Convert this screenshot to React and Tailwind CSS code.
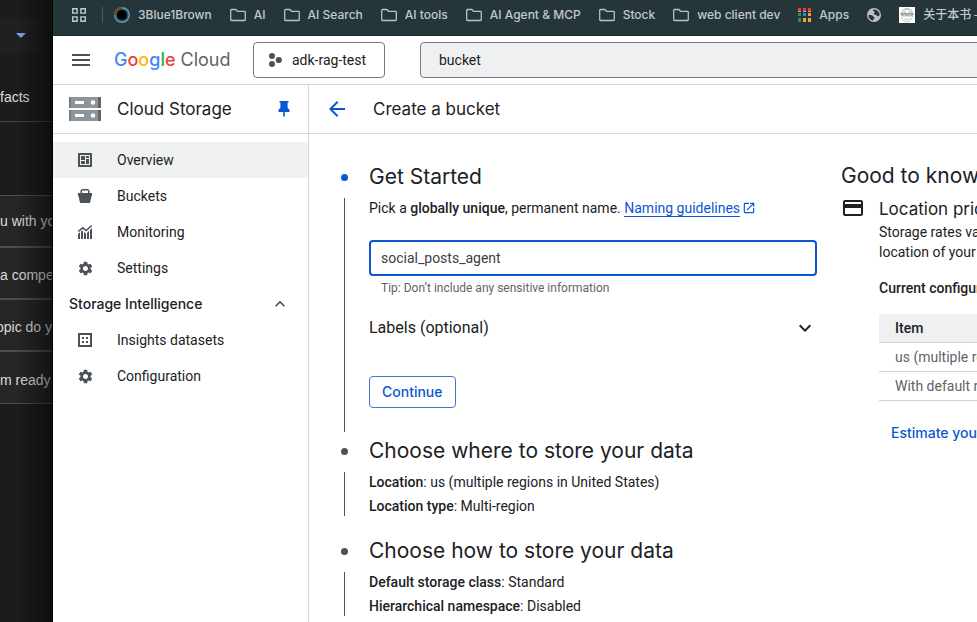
import { MdArrowBack, MdCreditCard, MdExpandLess, MdExpandMore, MdOpenInNew, MdSettings } from "react-icons/md";

const brand = "font-['Inter','Noto_Sans',sans-serif]";

function FolderIcon() {
  return (
    <svg className="h-4 w-4 shrink-0" viewBox="0 0 16 16" fill="none" stroke="#b9c1c2" strokeWidth="1.3">
      <path d="M.7 3.2a.7.7 0 0 1 .7-.7h4.4l1.700 1.800h7a.8.8 0 0 1 .8.8v7.600a.8.8 0 0 1-.8.8H1.500a.8.8 0 0 1-.8-.8z" />
    </svg>
  );
}

function GridIcon() {
  return (
    <svg className="h-[14px] w-[14px] shrink-0" viewBox="0 0 14 14" fill="none" stroke="#c3c9ca" strokeWidth="1.4">
      <path d="M.7.7h4.400v4.400H.7zM8.900.7h4.400v4.400H8.900zM.7 8.900h4.400v4.400H.7zM8.900 8.900h4.400v4.400H8.900z" />
    </svg>
  );
}

function EyeIcon() {
  return (
    <svg className="h-4 w-4 shrink-0" viewBox="0 0 16 16">
      <circle cx="8" cy="8" r="8" fill="#5a9cc0" />
      <path d="M8 8V0a8 8 0 0 0-8 8z" fill="#7a4d2b" />
      <circle cx="8" cy="8" r="6.6" fill="#2b5368" />
      <path d="M8 8V1.4A6.600 6.600 0 0 0 1.400 8z" fill="#5f3b22" />
      <circle cx="8" cy="8" r="5" fill="#000" />
    </svg>
  );
}

function AppsIcon() {
  return (
    <svg className="h-[14px] w-[13px] shrink-0" viewBox="0 0 13 14">
      <path d="M0 0h3v3H0zM5 0h3v3H5zM10 0h3v3h-3z" fill="#ee3a33" />
      <path d="M0 3h3v1H0zM5 3h3v1H5zM10 3h3v1h-3z" fill="#b9aeb0" />
      <path d="M0 5h3v3H0zM0 10h3v4H0z" fill="#2f9350" />
      <path d="M5 5h3v3H5z" fill="#2b84ee" />
      <path d="M10 5h3v3h-3zM5 10h3v4H5zM10 10h3v4h-3z" fill="#f6a623" />
    </svg>
  );
}

function GlobeIcon() {
  return (
    <svg className="h-[14px] w-[14px] shrink-0" viewBox="0 0 14 14">
      <circle cx="7" cy="7" r="7" fill="#bdc1c6" />
      <path d="M1.4 7.3c1.4-.5 3-.4 4 .2.9.5.6 1.3 1.4 1.6.8.3.8.9.3 1.4-.6.6-.5 1.3-.9 2.1C3.500 12.200 1.400 10 1.400 7.300zM6.200 1.500c2.800-.5 5.500 1.200 6.300 4.200.4 1.700-.5 2.700-1.600 2.500-1-.2-.8-1.200-1.900-1.300-.9-.1-2.200-.3-2.200-1.300 0-.8.9-.9 1-1.500.1-.7-.7-.7-1.300-1.100-.5-.4-.7-1-.3-1.500z" fill="#24363a" />
    </svg>
  );
}

function FaceIcon() {
  return (
    <svg className="h-4 w-4 shrink-0" viewBox="0 0 16 16" fill="none" stroke="#999" strokeWidth=".6">
      <path d="M0 0h16v16H0z" fill="#fff" stroke="none" />
      <path d="M2.500 8C2 3.500 4.500 1.500 8 1.500S14 3.500 13.500 8c-.3 4-2.500 7-5.500 7s-5.200-3-5.500-7z" />
      <path d="M3.500 5.500c1.500-1 3-1 4 0M9 5.500c1-1 2.500-1 4 0M5.500 12c1.500.8 3.500.8 5 0M4.500 3.500c2-1.500 5-1.500 7 0M8 8v2.500" />
      <path d="M1 7h14" stroke="#555" />
      <ellipse cx="5.300" cy="7.600" rx="2.200" ry="1.400" stroke="#555" />
      <ellipse cx="10.700" cy="7.600" rx="2.200" ry="1.400" stroke="#555" />
    </svg>
  );
}

function StorageIcon() {
  return (
    <svg className="h-6 w-8 shrink-0" viewBox="0 0 32 24">
      <path d="M0 0h32v11H0zM0 13h32v11H0z" fill="#8d949a" />
      <path d="M0 0h2v11H0zM0 13h2v11H0z" fill="#747b82" />
      <path d="M29 0h3v11h-3zM29 13h3v11h-3z" fill="#60666c" />
      <path d="M6 4h9v3H6zM6 17h9v3H6z" fill="#fff" />
      <circle cx="24" cy="5.500" r="2.200" fill="#fff" />
      <circle cx="24" cy="18.500" r="2.200" fill="#fff" />
    </svg>
  );
}

function PinIcon() {
  return (
    <svg className="h-4 w-3" viewBox="0 0 12 16" fill="#0b57d0">
      <path d="M1.500 0h9v1.600h-.9v5.200L11.500 9v2H6.800v4L6 16l-.8-1v-4H.5V9l1.900-2.200V1.600h-.9z" />
    </svg>
  );
}

function OverviewIcon() {
  return (
    <svg className="h-[14px] w-[14px]" viewBox="0 0 14 14">
      <rect width="14" height="14" rx="1" fill="#4b5157" />
      <path fill="#f0f2f1" d="M2 2h10v10H2z" />
      <path d="M3 3h4v4H3zM8 3h3v2H8zM8 6h3v5H8zM3 8h4v3H3z" fill="#4b5157" />
    </svg>
  );
}

function BucketIcon() {
  return (
    <svg className="h-[14px] w-[14px]" viewBox="0 0 14 14" fill="#4b5157">
      <path fillRule="evenodd" d="M4 0h6l1.500 1.500V4H14v3h-.5L12.200 13a1.200 1.200 0 0 1-1.200 1H3a1.200 1.200 0 0 1-1.200-1L.5 7H0V4h2.500V1.500zM4 1.500V4h6V1.500z" />
    </svg>
  );
}

function MonitoringIcon() {
  return (
    <svg className="h-[14px] w-[14px]" viewBox="0 0 14 14" fill="#4b5157">
      <path d="M0 9l2-1.800V14H0zM3 6.500l2-.9V14H3zM6 7l2 1.500V14H6zM9 8l2-2v8H9zM12 5l2-2v11h-2z" />
      <path d="M.3 6.500L4.800 2.800l3.400 2.700L13.700.5" fill="none" stroke="#4b5157" strokeWidth="1.500" />
    </svg>
  );
}

function DatasetIcon() {
  return (
    <svg className="h-[14px] w-[14px]" viewBox="0 0 14 14">
      <path d="M1 1h12v12H1z" fill="none" stroke="#4b5157" strokeWidth="2" />
      <path d="M4 4h2v2H4zM8 4h2v2H8zM4 8h2v2H4zM8 8h2v2H8z" fill="#4b5157" />
    </svg>
  );
}

function ProjectIcon() {
  return (
    <svg className="h-[14px] w-[14px] shrink-0" viewBox="0 0 14 14" fill="#4b5157">
      <circle cx="4" cy="3" r="3" />
      <circle cx="10.800" cy="7" r="3.100" />
      <circle cx="4" cy="11" r="3" />
    </svg>
  );
}

const bookmarks = [
  { icon: <EyeIcon />, label: "3Blue1Brown" },
  { icon: <FolderIcon />, label: "AI" },
  { icon: <FolderIcon />, label: "AI Search" },
  { icon: <FolderIcon />, label: "AI tools" },
  { icon: <FolderIcon />, label: "AI Agent & MCP" },
  { icon: <FolderIcon />, label: "Stock" },
  { icon: <FolderIcon />, label: "web client dev" },
  { icon: <AppsIcon />, label: "Apps" },
  { icon: <GlobeIcon />, label: "" },
  { icon: <FaceIcon />, label: "关于本书 —" },
];

function BookmarksBar() {
  return (
    <nav aria-label="Bookmarks" className="flex h-9 items-center overflow-hidden border-b border-[#1b2b2f] bg-[#24363a] pb-[5px] pl-[19px] font-['Inter','Noto_Sans_CJK_SC',sans-serif] text-xs font-medium whitespace-nowrap text-[#c3c9ca]">
      <button aria-label="All bookmarks"><GridIcon /></button>
      <span className="mr-[11px] ml-4 h-4 w-px shrink-0 bg-[#4b5b5f]" />
      <div className="flex gap-[18px]">
        {bookmarks.map((b, i) => (
          <a key={i} href="#" aria-label={b.label || "Website"} className="flex h-4 shrink-0 items-center gap-2">
            {b.icon}
            {b.label && <span>{b.label}</span>}
          </a>
        ))}
      </div>
    </nav>
  );
}

function BackgroundWindow() {
  return (
    <aside className="relative w-[53px] shrink-0 overflow-hidden border-r border-black bg-[#1c1c1c] font-['Liberation_Sans',sans-serif] text-sm leading-5 whitespace-nowrap text-[#dcdcdc]">
      <div className="pt-[18px]">
        <div className="flex h-[35px] w-[46px] items-center justify-end rounded-r-lg bg-[#202023] pr-5">
          <svg className="h-[5px] w-[10px]" viewBox="0 0 10 5" fill="#7ba4f0"><path d="M0 0h10L5 5z" /></svg>
        </div>
      </div>
      <div className="flex h-[69px] items-center border-b border-[#444] pt-5">facts</div>
      <div className="mt-[73px] border-t border-[#4b4e52] bg-[#262627]">
        <div className="flex h-[52px] items-center border-b-2 border-[#4b4f55]">u with your</div>
        <div className="flex h-[52px] items-center border-b-2 border-[#4b4f55] pt-1">a compe</div>
        <div className="flex h-[52px] items-center justify-end border-b-2 border-[#4b4f55] pt-1">opic do y</div>
        <div className="flex h-[52px] items-center border-b border-[#4b4e52] pt-1">m ready</div>
      </div>
      <div className="absolute inset-y-0 right-0 w-9 bg-linear-to-r from-transparent to-black/50" />
    </aside>
  );
}

function TopBar() {
  return (
    <header className="flex h-[49px] items-center overflow-hidden border-b border-[#d5d7da] pl-[19px]">
      <button aria-label="Main menu" className="shrink-0">
        <svg className="h-3 w-[18px]" viewBox="0 0 18 12" fill="#4b5157"><path d="M0 0h18v2H0zM0 5h18v2H0zM0 10h18v2H0z" /></svg>
      </button>
      <a href="#" className={`ml-6 w-[116px] shrink-0 text-lg whitespace-nowrap ${brand}`}>
        <span className="font-medium">
          <span className="text-[#4285f4]">G</span><span className="text-[#ea4335]">o</span><span className="text-[#fbbc04]">o</span><span className="text-[#4285f4]">g</span><span className="text-[#34a853]">l</span><span className="text-[#ea4335]">e</span>
        </span>{" "}
        <span className="text-[#5f6368]">Cloud</span>
      </a>
      <button className="ml-[23px] flex h-9 w-[132px] shrink-0 items-center gap-[10px] rounded border border-[#747980] pl-[14px] text-[#202124]">
        <ProjectIcon />
        <span>adk-rag-test</span>
      </button>
      <input aria-label="Search" defaultValue="bucket" className="-mr-1 ml-[35px] h-9 min-w-0 flex-1 rounded border border-[#747980] bg-[#eff0f2] px-[18px] text-[#202124] outline-none" />
    </header>
  );
}

function NavItem({ icon, label, active }) {
  return (
    <a href="#" className={`flex h-9 items-center pl-6 ${active ? "bg-[#f0f2f1]" : ""}`}>
      <span className="flex w-4 shrink-0 justify-center">{icon}</span>
      <span className="ml-6">{label}</span>
    </a>
  );
}

function Sidebar() {
  return (
    <aside className="flex w-64 shrink-0 flex-col border-r border-[#d5d7da]">
      <div className="flex h-[49px] shrink-0 items-center border-b border-[#d5d7da] pr-[18px] pl-4">
        <StorageIcon />
        <h2 className={`ml-4 flex-1 text-[17px] ${brand}`}>Cloud Storage</h2>
        <button aria-label="Unpin menu"><PinIcon /></button>
      </div>
      <nav aria-label="Cloud Storage" className="pt-2">
        <NavItem icon={<OverviewIcon />} label="Overview" active />
        <NavItem icon={<BucketIcon />} label="Buckets" />
        <NavItem icon={<MonitoringIcon />} label="Monitoring" />
        <NavItem icon={<MdSettings className="h-[17px] w-[17px] shrink-0 text-[#4b5157]" />} label="Settings" />
        <button className="flex h-9 w-full items-center justify-between pr-[18px] pl-4 font-medium">
          <span className={brand}>Storage Intelligence</span>
          <MdExpandLess className="h-5 w-5 text-[#4b5157]" />
        </button>
        <NavItem icon={<DatasetIcon />} label="Insights datasets" />
        <NavItem icon={<MdSettings className="h-[17px] w-[17px] shrink-0 text-[#4b5157]" />} label="Configuration" />
      </nav>
    </aside>
  );
}

function Step({ title, active, className, children }) {
  return (
    <section className={className}>
      <div className="flex items-center gap-[21px]">
        <span className={`h-[7px] w-[7px] shrink-0 rounded-full ${active ? "bg-[#0b57d0]" : "bg-[#4b5157]"}`} />
        <h2 className={`text-[21px] leading-7 ${brand}`}>{title}</h2>
      </div>
      <div className="mt-[5px] flex">
        <span className="my-[2px] mr-6 ml-[3px] w-px shrink-0 bg-[#4b5157]" />
        <div className="min-w-0 flex-1 leading-6">{children}</div>
      </div>
    </section>
  );
}

function CreateForm() {
  return (
    <form className="w-[476px] shrink-0 pt-[29px]">
      <Step title="Get Started" active className="mb-[3px]">
        <p>
          Pick a <b className="font-medium">globally unique</b>, permanent name.{" "}
          <a href="#" className="text-[#0b57d0]">
            <span className="border-b border-[#0b57d0]">Naming guidelines</span>
            <MdOpenInNew className="ml-[2px] inline h-[14px] w-[14px] align-[-2px]" />
          </a>
        </p>
        <input aria-label="Bucket name" defaultValue="social_posts_agent" className="mt-5 block h-9 w-full rounded border-2 border-[#0b57d0] px-[10px] text-[#3c4043] outline-none" />
        <p className="mt-1 pl-3 text-xs leading-4 text-[#5f6368]">Tip: Don’t include any sensitive information</p>
        <button type="button" className="mt-5 flex h-6 w-full items-center justify-between text-base">
          <span>Labels (optional)</span>
          <MdExpandMore className="h-6 w-6" />
        </button>
        <button type="button" className={`mt-9 mb-[26px] block h-8 rounded border border-[#3f76d3] px-3 font-medium text-[#0b57d0] ${brand}`}>Continue</button>
      </Step>
      <Step title="Choose where to store your data" className="mb-[19px]">
        <p><b className="font-medium">Location</b>: us (multiple regions in United States)</p>
        <p><b className="font-medium">Location type</b>: Multi-region</p>
      </Step>
      <Step title="Choose how to store your data">
        <p><b className="font-medium">Default storage class</b>: Standard</p>
        <p><b className="font-medium">Hierarchical namespace</b>: Disabled</p>
      </Step>
    </form>
  );
}

function GoodToKnow() {
  return (
    <aside className="ml-6 w-80 shrink-0 pt-7 whitespace-nowrap">
      <h2 className={`text-[21px] leading-7 ${brand}`}>Good to know</h2>
      <div className="mt-[6px] flex">
        <MdCreditCard className="h-6 w-6 shrink-0" />
        <div className="ml-[14px] flex-1">
          <h3 className={`text-[17px] leading-[26px] ${brand}`}>Location pricing</h3>
          <p className="leading-5">Storage rates vary by the<br />location of your bucket</p>
          <p className="mt-4 leading-5 font-medium">Current configuration</p>
          <table className="mt-4 w-full text-left leading-7">
            <thead className="bg-[#eff0f2]">
              <tr className="border-b border-[#d0d2d6]"><th className="pl-4 font-medium">Item</th></tr>
            </thead>
            <tbody className="text-[#5f6368]">
              <tr className="border-b border-[#d0d2d6]"><td className="pl-4">us (multiple regions)</td></tr>
              <tr className="border-b border-[#d0d2d6]"><td className="pl-4">With default replication</td></tr>
            </tbody>
          </table>
          <a href="#" className={`mt-4 block pl-3 leading-8 font-medium text-[#0b57d0] ${brand}`}>Estimate your monthly cost</a>
        </div>
      </div>
    </aside>
  );
}

export default function App() {
  return (
    <div className="flex h-screen overflow-hidden bg-white font-['Roboto',sans-serif] text-sm text-[#202124]">
      <BackgroundWindow />
      <div className="flex min-w-0 flex-1 flex-col">
        <BookmarksBar />
        <TopBar />
        <div className="flex min-h-0 flex-1">
          <Sidebar />
          <main className="min-w-0 flex-1 overflow-hidden">
            <div className="flex h-[49px] items-center border-b border-[#d5d7da] pl-4">
              <button aria-label="Back"><MdArrowBack className="h-6 w-6 text-[#0b57d0]" /></button>
              <h1 className={`ml-6 text-[17px] ${brand}`}>Create a bucket</h1>
            </div>
            <div className="flex pl-8">
              <CreateForm />
              <GoodToKnow />
            </div>
          </main>
        </div>
      </div>
    </div>
  );
}
